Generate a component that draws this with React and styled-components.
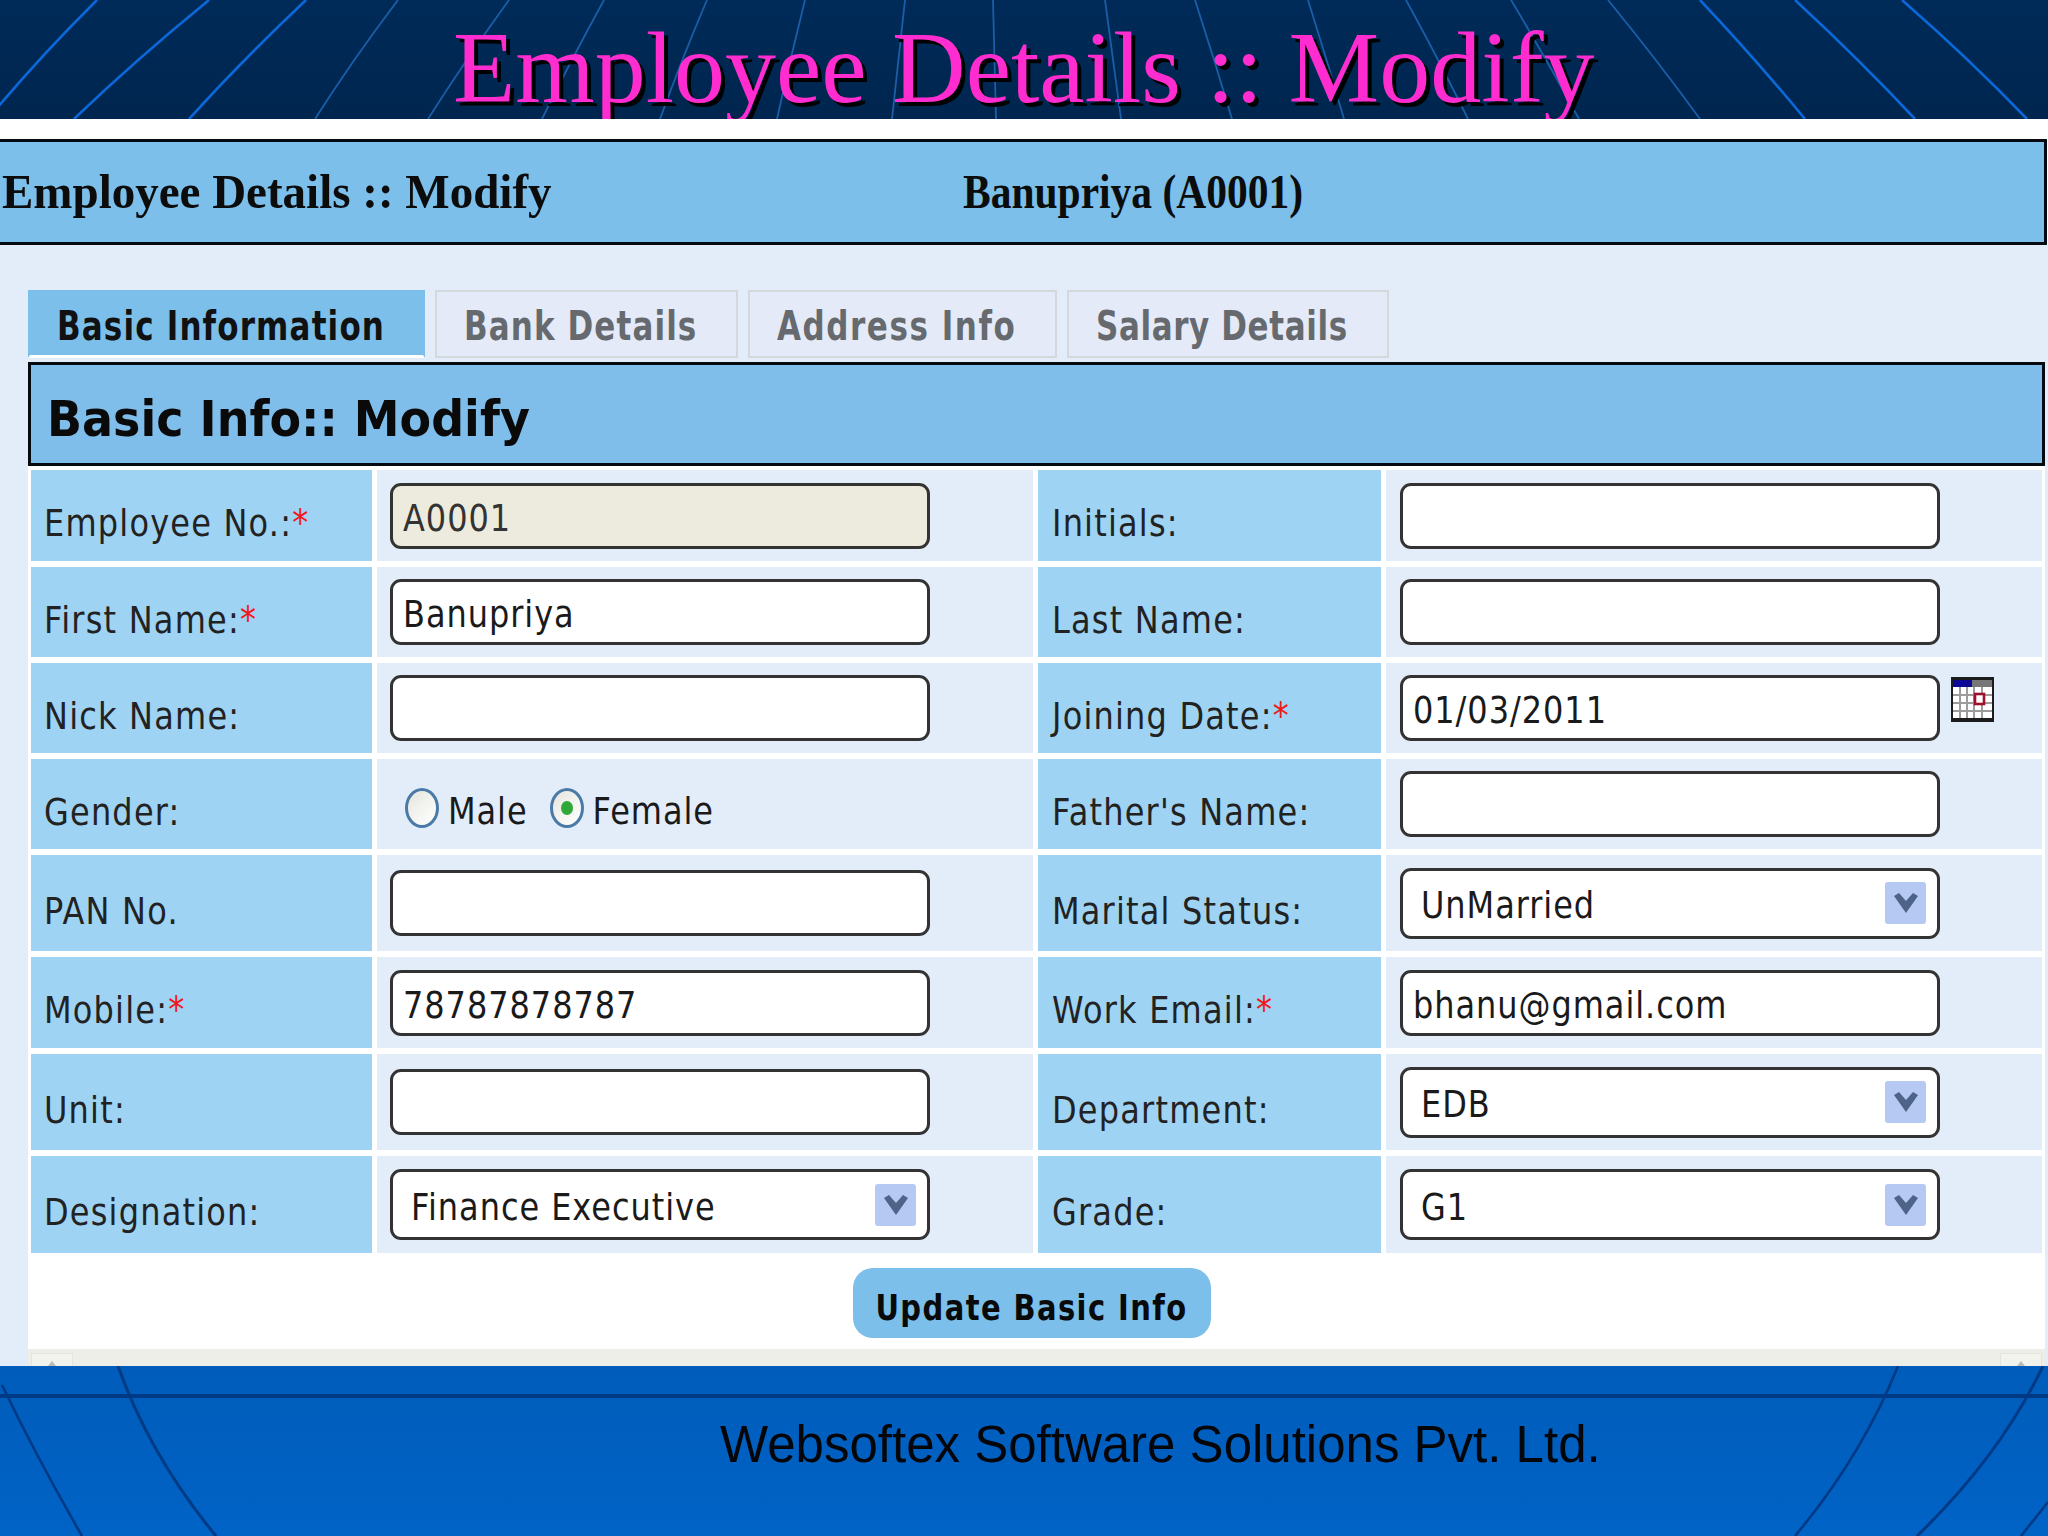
import React from 'react';
import styled, { createGlobalStyle } from 'styled-components';

const GlobalStyle = createGlobalStyle`
  html, body { margin: 0; padding: 0; background: #fff; }
  * { box-sizing: border-box; }
`;

const Slide = styled.div`
  width: 2048px;
  height: 1536px;
  overflow: hidden;
  display: flex;
  flex-direction: column;
  background: #fff;
`;

// the whole capture is stretched vertically, so text gets a scaleY
const Tall = styled.span`
  display: inline-block;
  white-space: nowrap;
  transform: scaleY(${p => p.$y || 1.18});
  transform-origin: 50% 60%;
`;

const FieldText = styled(Tall)`
  margin-top: 6px;
  letter-spacing: 0.95px;
`;

const Banner = styled.header`
  position: relative;
  flex: 0 0 119px;
  height: 119px;
  overflow: hidden;
  background: linear-gradient(#002a58, #00264f);
  padding-left: 453px;
`;

const BannerTitle = styled.h1`
  position: relative;
  margin: 0;
  font: normal 102px/1 'Liberation Serif', serif;
  color: #ff2ccf;
  text-shadow: 4px 4px 0 #000;
  padding-top: 17px;
`;

const Backdrop = styled.svg`
  position: absolute;
  left: 0;
  top: 0;
`;

const TitleBar = styled.div`
  flex: 0 0 106px;
  width: 2047px;
  margin-top: 20px;
  display: flex;
  align-items: center;
  background: #7bbfea;
  border: 3px solid #050a10;
  border-left: 0;
  color: #0c0c0c;
  font: bold 41.5px/1 'Liberation Serif', serif;
`;

const TitleLeft = styled.div`
  width: 963px;
  padding: 0 0 2px 2px;
  font-size: 47px;
`;

const TitleRight = styled.div`
  padding-top: 2px;
`;

const Content = styled.div`
  flex: 1;
  min-height: 0;
  background: #e3ecf9;
  padding: 45px 3px 0 28px;
  display: flex;
  flex-direction: column;
`;

const Tabs = styled.div`
  display: flex;
  gap: 10px;
  height: 68px;
  margin-bottom: 4px;
`;

const Tab = styled.div`
  width: ${p => p.$w}px;
  display: flex;
  align-items: center;
  padding: 7px 0 0 ${p => (p.$active ? 27 : 27)}px;
  font: bold 31px/1 'DejaVu Sans', sans-serif;
  letter-spacing: ${p => p.$spacing}px;
  color: ${p => (p.$active ? '#111' : '#666a6e')};
  background: ${p => (p.$active ? '#7bbfea' : '#e4eaf7')};
  border: 2px solid ${p => (p.$active ? '#7bbfea' : '#d3d8da')};
  ${p => p.$active && 'border-bottom: 3px solid #fff;'}
`;

const PanelHead = styled.div`
  flex: 0 0 104px;
  display: flex;
  align-items: center;
  padding: 10px 0 0 16px;
  background: #7fbdea;
  border: 3px solid #050a10;
  color: #0a0a0a;
  font: bold 46px/1 'DejaVu Sans', sans-serif;
`;

const PanelBody = styled.div`
  flex: 1;
  min-height: 0;
  background: #fff;
  display: flex;
  flex-direction: column;
`;

const Form = styled.div`
  display: grid;
  grid-template-columns: 341px 656px 343px 656px;
  grid-template-rows: 91px 90px 90px 90px 96px 91px 96px 97px;
  column-gap: 5px;
  row-gap: 6px;
  padding: 4px 0 0 3px;
  font: 32px/1 'DejaVu Sans', sans-serif;
  letter-spacing: 1.2px;
`;

const Label = styled.div`
  display: flex;
  align-items: center;
  padding: 17px 0 0 ${p => (p.$right ? 14 : 13)}px;
  background: #9fd3f3;
  color: #222;
`;

const Required = styled.span`
  color: #f01818;
`;

const Value = styled.div`
  display: flex;
  align-items: center;
  gap: 11px;
  padding-left: ${p => (p.$right ? 14 : 13)}px;
  background: #e3ecf9;
  color: #1a1a1a;
`;

const Input = styled.div`
  width: 540px;
  height: 66px;
  flex: none;
  display: flex;
  align-items: center;
  padding-left: 10px;
  background: ${p => (p.$locked ? '#ecebdd' : '#fff')};
  border: 3px solid #333;
  border-radius: 11px;
  color: ${p => (p.$locked ? '#333' : '#1a1a1a')};
`;

const Select = styled(Input)`
  height: 71px;
  justify-content: space-between;
  padding: 0 11px 0 18px;
`;

const SelectArrow = styled.span`
  width: 41px;
  height: 42px;
  display: flex;
  align-items: center;
  justify-content: center;
  background: #b6c9f3;
  border-radius: 3px;
`;

const RadioRow = styled.div`
  display: flex;
  align-items: center;
  padding: 16px 0 0 15px;
  letter-spacing: 0.95px;
`;

const RadioDot = styled.span`
  width: 34px;
  height: 40px;
  margin-right: 9px;
  margin-top: -8px;
  display: flex;
  align-items: center;
  justify-content: center;
  border-radius: 50%;
  border: 3px solid #4a7ba8;
  background: linear-gradient(135deg, #e6e6df, #fff);
`;

const RadioMark = styled.span`
  width: 12px;
  height: 14px;
  border-radius: 50%;
  background: #2ea836;
`;

const RadioText = styled.span`
  margin-right: ${p => p.$gap || 0}px;
`;

const CalendarWrap = styled.span`
  display: flex;
  margin-bottom: 18px;
`;

const ButtonRow = styled.div`
  display: flex;
  justify-content: center;
  padding: 15px 10px 0 0;
`;

const UpdateButton = styled.button`
  width: 358px;
  height: 70px;
  padding: 12px 0 0;
  border: 0;
  border-radius: 20px;
  background: #7bbfea;
  color: #0a0a0a;
  font: bold 29px/1 'DejaVu Sans', sans-serif;
  letter-spacing: 1.4px;
`;

const ScrollTrack = styled.div`
  margin-top: auto;
  flex: 0 0 17px;
  display: flex;
  justify-content: space-between;
  align-items: flex-end;
  padding: 0 3px;
  background: #eeeee9;
`;

const ScrollEnd = styled.span`
  width: 42px;
  height: 13px;
  display: flex;
  justify-content: center;
  align-items: flex-end;
  background: #f3f3ee;
  border: 1px solid #e4e4de;
  border-bottom: 0;

  &::after {
    content: '';
    border: 4px solid transparent;
    border-top: 0;
    border-bottom: 5px solid #bcbcb6;
  }
`;

const Footer = styled.footer`
  position: relative;
  flex: 0 0 170px;
  background: linear-gradient(#005cba, #0063c6);
  padding: 50px 0 0 720px;
`;

const FooterText = styled.div`
  position: relative;
  color: #05060a;
  font: 51px/1.15 'Liberation Sans', sans-serif;
`;

// top x, bottom x, bright outer line or dim inner one, bend
const bannerLines = [
  [97, -12, 1, -6], [209, 74, 1, -6], [306, 189, 1, -5], [398, 315, 0, -4],
  [509, 428, 0, -3], [604, 542, 0, -2], [707, 660, 0, -2], [805, 777, 0, -1],
  [905, 892, 0, 0], [993, 996, 0, 0], [1105, 1121, 0, 0], [1195, 1232, 0, 1],
  [1308, 1344, 0, 1], [1406, 1468, 0, 2], [1511, 1579, 0, 2], [1608, 1700, 0, 3],
  [1700, 1805, 1, 4], [1795, 1915, 1, 5], [1902, 2027, 1, 6]
];

const BannerLines = () => (
  <Backdrop width="2048" height="119" viewBox="0 0 2048 119" fill="none">
    {bannerLines.map(([top, bottom, bright, bend]) => (
      <path
        key={top}
        d={`M${top} 0Q${(top + bottom) / 2 + bend} 60 ${bottom} 119`}
        stroke={bright ? '#0a68d8' : '#1a5ea8'}
        strokeWidth={bright ? 2.6 : 1.8}
      />
    ))}
  </Backdrop>
);

const FooterLines = () => (
  <Backdrop width="2048" height="170" viewBox="0 0 2048 170" fill="none" stroke="#003a85" strokeWidth="3">
    <path d="M0 30H2048" strokeWidth="4" />
    <path d="M118 0Q150 90 216 170" />
    <path d="M2 19Q36 90 82 170" strokeWidth="2.6" />
    <path d="M1898 0Q1862 90 1795 170" strokeWidth="2.6" />
    <path d="M2043 0Q2000 90 1917 170" />
    <path d="M2048 136L2021 170" strokeWidth="2.6" />
  </Backdrop>
);

const Chevron = () => (
  <svg width="26" height="24" viewBox="0 0 26 24" aria-hidden="true">
    <path d="M1 5l5-3 7 8 7-8 5 3-12 17z" fill="#4d6388" />
  </svg>
);

const CalendarIcon = () => (
  <svg width="43" height="45" viewBox="0 0 43 45" aria-hidden="true">
    <rect width="43" height="45" fill="#1c1c1c" />
    <rect x="2" y="3" width="19" height="7" fill="#0a0a96" />
    <rect x="21" y="3" width="20" height="7" fill="#777" />
    <rect x="2" y="10" width="39" height="31" fill="#fff" />
    <path
      d="M9 10v31M16 10v31M23 10v31M31 10v31M2 18h39M2 26h39M2 34h39"
      stroke="#9c9c9c"
      strokeWidth="2"
    />
    <rect x="24" y="17" width="9" height="10" fill="#fff" stroke="#a0102c" strokeWidth="2.6" />
  </svg>
);

const Text = ({ children, y }) => <Tall $y={y}>{children}</Tall>;

const rows = [
  [
    { label: 'Employee No.:', required: true, input: 'A0001', locked: true },
    { label: 'Initials:', input: '' }
  ],
  [
    { label: 'First Name:', required: true, input: 'Banupriya' },
    { label: 'Last Name:', input: '' }
  ],
  [
    { label: 'Nick Name:', input: '' },
    { label: 'Joining Date:', required: true, input: '01/03/2011', calendar: true }
  ],
  [
    { label: 'Gender:', radio: true },
    { label: "Father's Name:", input: '' }
  ],
  [
    { label: 'PAN No.', input: '' },
    { label: 'Marital Status:', select: 'UnMarried' }
  ],
  [
    { label: 'Mobile:', required: true, input: '78787878787' },
    { label: 'Work Email:', required: true, input: 'bhanu@gmail.com' }
  ],
  [
    { label: 'Unit:', input: '' },
    { label: 'Department:', select: 'EDB' }
  ],
  [
    { label: 'Designation:', select: 'Finance Executive' },
    { label: 'Grade:', select: 'G1' }
  ]
];

const Field = ({ cell }) => {
  if (cell.radio) {
    return (
      <RadioRow>
        <RadioDot />
        <RadioText $gap={22}><Text>Male</Text></RadioText>
        <RadioDot><RadioMark /></RadioDot>
        <RadioText><Text>Female</Text></RadioText>
      </RadioRow>
    );
  }
  if (cell.select) {
    return (
      <Select>
        <FieldText>{cell.select}</FieldText>
        <SelectArrow><Chevron /></SelectArrow>
      </Select>
    );
  }
  return (
    <>
      <Input $locked={cell.locked}>
        <FieldText>{cell.input}</FieldText>
      </Input>
      {cell.calendar && <CalendarWrap><CalendarIcon /></CalendarWrap>}
    </>
  );
};

const tabs = [
  { name: 'Basic Information', w: 397, spacing: 1.15, active: true },
  { name: 'Bank Details', w: 303, spacing: 1.1 },
  { name: 'Address Info', w: 309, spacing: 1.55 },
  { name: 'Salary Details', w: 322, spacing: 0.6 }
];

const App = () => (
  <Slide>
    <GlobalStyle />
    <Banner>
      <BannerLines />
      <BannerTitle>Employee Details :: Modify</BannerTitle>
    </Banner>
    <TitleBar>
      <TitleLeft><Text y={1.05}>Employee Details :: Modify</Text></TitleLeft>
      <TitleRight><Text y={1.18}>Banupriya (A0001)</Text></TitleRight>
    </TitleBar>
    <Content>
      <Tabs>
        {tabs.map(tab => (
          <Tab key={tab.name} $w={tab.w} $spacing={tab.spacing} $active={tab.active}>
            <Text y={1.3}>{tab.name}</Text>
          </Tab>
        ))}
      </Tabs>
      <PanelHead><Text y={1.1}>Basic Info:: Modify</Text></PanelHead>
      <PanelBody>
        <Form>
          {rows.map(row =>
            row.map((cell, i) => (
              <React.Fragment key={cell.label}>
                <Label $right={i === 1}>
                  <Text>
                    {cell.label}
                    {cell.required && <Required>*</Required>}
                  </Text>
                </Label>
                <Value $right={i === 1}><Field cell={cell} /></Value>
              </React.Fragment>
            ))
          )}
        </Form>
        <ButtonRow>
          <UpdateButton><Text y={1.2}>Update Basic Info</Text></UpdateButton>
        </ButtonRow>
        <ScrollTrack>
          <ScrollEnd />
          <ScrollEnd />
        </ScrollTrack>
      </PanelBody>
    </Content>
    <Footer>
      <FooterLines />
      <FooterText>Websoftex Software Solutions Pvt. Ltd.</FooterText>
    </Footer>
  </Slide>
);

export default App;
